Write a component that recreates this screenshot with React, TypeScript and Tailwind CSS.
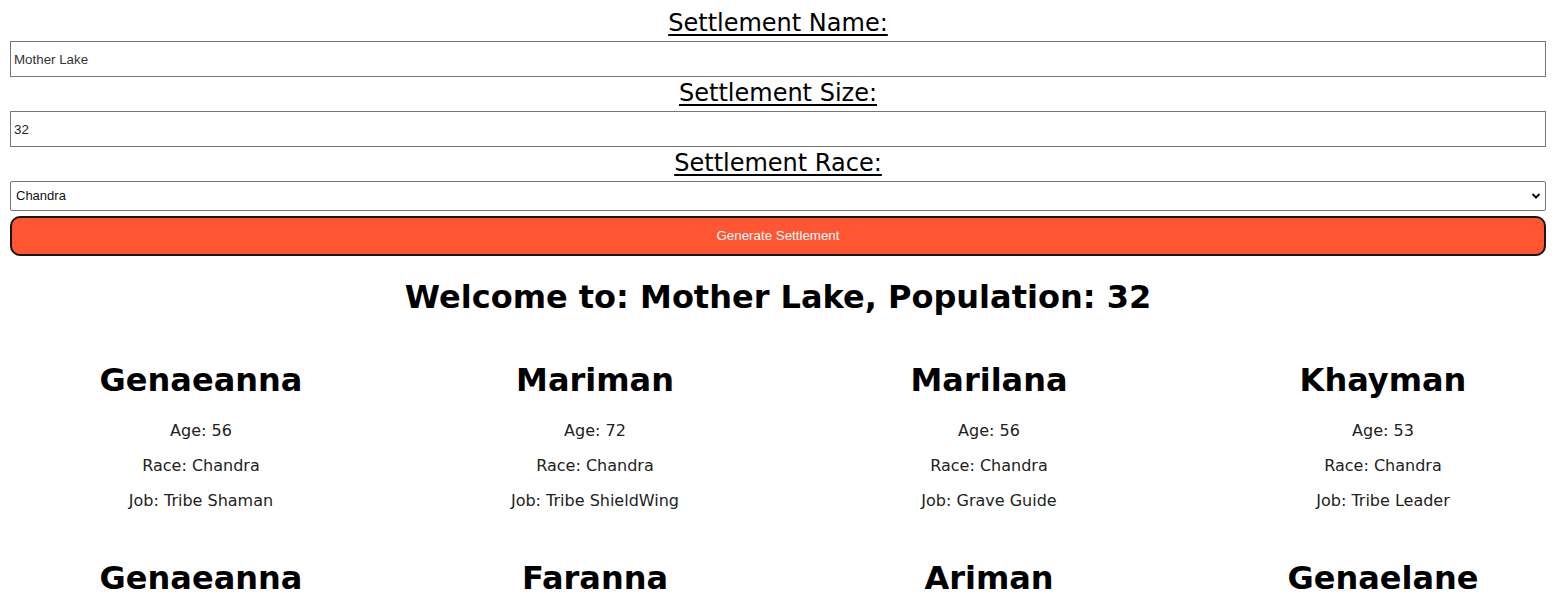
import React from 'react';

const people = [
  { name: 'Genaeanna', age: 56, race: 'Chandra', job: 'Tribe Shaman' },
  { name: 'Mariman', age: 72, race: 'Chandra', job: 'Tribe ShieldWing' },
  { name: 'Marilana', age: 56, race: 'Chandra', job: 'Grave Guide' },
  { name: 'Khayman', age: 53, race: 'Chandra', job: 'Tribe Leader' },
  { name: 'Genaeanna', age: 41, race: 'Chandra', job: 'Hunter' },
  { name: 'Faranna', age: 38, race: 'Chandra', job: 'Gatherer' },
  { name: 'Ariman', age: 29, race: 'Chandra', job: 'Hunter' },
  { name: 'Genaelane', age: 64, race: 'Chandra', job: 'Elder' },
];

const App: React.FC = () => {
  return (
    <div className="w-full min-h-screen overflow-hidden bg-white text-black font-['DejaVu_Sans',sans-serif]">
      {/* Form */}
      <div className="pl-[10px] pr-[15px] pt-[8px] flex flex-col">
        <label className="block text-center text-[24px] leading-[28px] pt-px underline underline-offset-[3px] decoration-[1.5px] mb-[4px]">Settlement Name:</label>
        <input
          defaultValue="Mother Lake"
          className="w-full h-[36px] border border-[#767676] px-[3px] text-[13.33px] text-[#333] font-['Liberation_Sans',Arial,sans-serif] mb-px outline-none"
        />
        <label className="block text-center text-[24px] leading-[28px] pt-px underline underline-offset-[3px] decoration-[1.5px] mb-[4px]">Settlement Size:</label>
        <input
          defaultValue="32"
          className="w-full h-[36px] border border-[#767676] px-[3px] text-[13.33px] text-[#222] font-['Liberation_Sans',Arial,sans-serif] mb-px outline-none"
        />
        <label className="block text-center text-[24px] leading-[28px] pt-px underline underline-offset-[3px] decoration-[1.5px] mb-[4px]">Settlement Race:</label>
        <div className="relative w-full h-[30px] border border-[#767676] rounded-[2px] mb-[5px] flex items-center">
          <span className="pl-[5px] text-[13px] text-[#111] font-['Liberation_Sans',Arial,sans-serif]">Chandra</span>
          <svg className="absolute right-[4px] top-[10px]" width="10" height="8" viewBox="0 0 10 8">
            <path d="M1.5 2 L5 5.5 L8.5 2" fill="none" stroke="#111" strokeWidth="2" />
          </svg>
        </div>
        <button className="w-full h-[40px] bg-[#ff5533] border-2 border-[#161616] rounded-[10px] text-white text-[13.33px] font-['Liberation_Sans',Arial,sans-serif]">
          Generate Settlement
        </button>
      </div>

      {/* Welcome */}
      <div className="pr-[5px]">
        <h1 className="text-center text-[32px] leading-[37px] font-bold mt-[23px]">Welcome to: Mother Lake, Population: 32</h1>
      </div>

      {/* Residents */}
      <div className="grid grid-cols-[repeat(4,394px)] ml-[4px] mt-[26px]">
        {people.map((p, i) => (
          <div key={i} className="text-center mb-[30px]">
            <h2 className="text-[32px] leading-[37px] font-bold mt-[20px] mb-[22px]">{p.name}</h2>
            <p className="text-[16px] leading-[19px] text-[#222]">Age: {p.age}</p>
            <p className="text-[16px] leading-[19px] text-[#222] mt-[16px]">Race: {p.race}</p>
            <p className="text-[16px] leading-[19px] text-[#222] mt-[16px]">Job: {p.job}</p>
          </div>
        ))}
      </div>
    </div>
  );
};

export default App;
